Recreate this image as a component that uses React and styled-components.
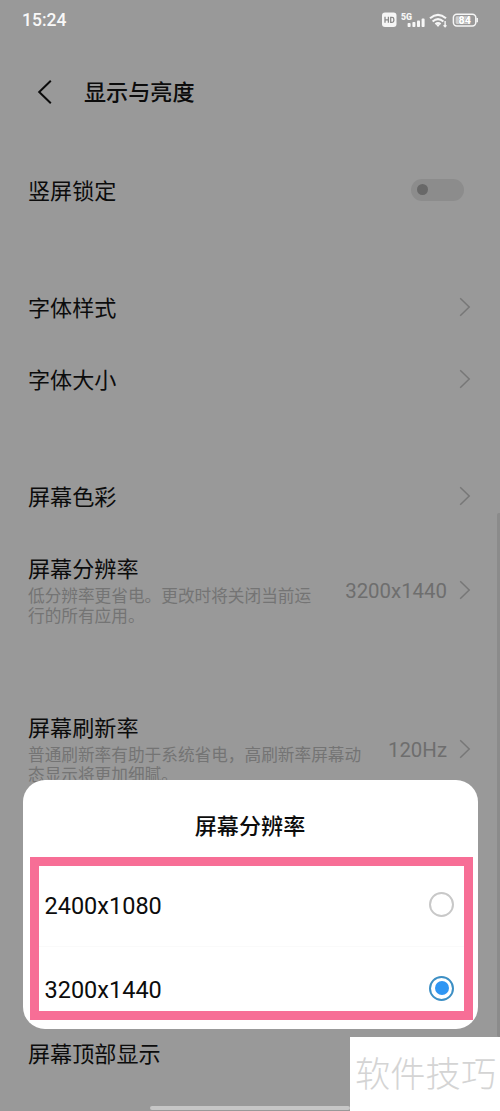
import React, { useState } from "react";
import styled, { createGlobalStyle } from "styled-components";

const resolutions = ["2400x1080", "3200x1440"];

const Chevron = () => (
  <svg width="12" height="20" viewBox="0 0 12 20" fill="none">
    <path d="M1.2 1.2 L10.2 10 L1.2 18.8" stroke="#777" strokeWidth="1.5" />
  </svg>
);

const StatusIcons = () => (
  <svg width="98" height="18" viewBox="0 0 98 18">
    {/* HD */}
    <rect x="2" y="1.5" width="14.5" height="14.5" rx="3" fill="#f6f6f6" />
    <path
      d="M5 5.8v6M8.4 5.8v6M5 8.8h3.4M10.7 6.4h1.4q1.7 0 1.7 1.6v1.8q0 1.5-1.7 1.5h-1.4z"
      stroke="#8a8a8a"
      strokeWidth="1.3"
      fill="none"
    />
    {/* signal */}
    <text x="21" y="8.5" fontFamily="Roboto, sans-serif" fontSize="8.8" fontWeight="900" fill="#f6f6f6">
      5G
    </text>
    <g fill="#f6f6f6">
      <rect x="27.6" y="12" width="3" height="4" rx="0.8" />
      <rect x="32.4" y="11" width="3" height="5" rx="0.8" />
      <rect x="37" y="9.4" width="3" height="6.6" rx="0.8" />
      <rect x="41.6" y="7.6" width="3" height="8.4" rx="0.8" />
    </g>
    {/* wifi */}
    <g fill="none" stroke="#f6f6f6" strokeWidth="2.1">
      <path d="M50 7.2Q58 0.4 66 7.2" />
      <path d="M52.6 10.5Q58 5.9 63.4 10.5" />
      <path d="M55.4 13.2Q58 11.2 60.6 13.2" />
    </g>
    <path d="M55.8 13.2h4.4L58 16z" fill="#f6f6f6" />
    <path d="M65.1 10v5.6M63.6 14.2l1.5 1.6 1.3-1.6" stroke="#f6f6f6" strokeWidth="1.4" fill="none" />
    {/* battery */}
    <rect x="73.4" y="3.2" width="22.4" height="11.8" rx="3.4" fill="none" stroke="#f6f6f6" strokeWidth="1.5" />
    <rect x="75.6" y="5.3" width="15" height="7.6" rx="1.4" fill="#cfcfcf" />
    <path d="M97.2 7v4.2" stroke="#f6f6f6" strokeWidth="1.5" />
    <text x="78.6" y="12.9" fontFamily="Roboto, sans-serif" fontSize="10.6" fontWeight="900" fill="#fff" stroke="#999" strokeWidth="0.8" paintOrder="stroke">
      84
    </text>
  </svg>
);

const App = () => {
  const [selected, setSelected] = useState("3200x1440");

  return (
    <Screen>
      <GlobalStyle />
      <StatusBar>
        <Time>15:24</Time>
        <StatusIcons />
      </StatusBar>
      <Header>
        <svg width="16" height="26" viewBox="0 0 16 26" fill="none">
          <path d="M13.8 1.8 L2.2 13 L13.8 24.2" stroke="#0c0c0c" strokeWidth="2" />
        </svg>
        <h1>显示与亮度</h1>
      </Header>

      <Group>
        <Row>
          <Label>竖屏锁定</Label>
          <Toggle>
            <span />
          </Toggle>
        </Row>
      </Group>
      <Group>
        <Row>
          <Label>字体样式</Label>
          <Chevron />
        </Row>
        <Row>
          <Label>字体大小</Label>
          <Chevron />
        </Row>
      </Group>
      <Group>
        <Row>
          <Label>屏幕色彩</Label>
          <Chevron />
        </Row>
        <Row $tall>
          <div>
            <Label>屏幕分辨率</Label>
            <Desc>
              低分辨率更省电。更改时将关闭当前运
              <br />
              行的所有应用。
            </Desc>
          </div>
          <Value>
            <span>3200x1440</span>
            <Chevron />
          </Value>
        </Row>
      </Group>
      <Group>
        <Row $tall>
          <div>
            <Label>屏幕刷新率</Label>
            <Desc>
              普通刷新率有助于系统省电，高刷新率屏幕动
              <br />
              态显示将更加细腻。
            </Desc>
          </div>
          <Value>
            <span>120Hz</span>
            <Chevron />
          </Value>
        </Row>
      </Group>
      <LastGroup>
        <Row>
          <Label>屏幕顶部显示</Label>
        </Row>
      </LastGroup>

      <ScrollThumb />
      <HomeBar />

      <Dialog>
        <DialogTitle>屏幕分辨率</DialogTitle>
        <Options>
          {resolutions.map((item) => (
            <Option key={item} onClick={() => setSelected(item)}>
              <span>{item}</span>
              <Radio $checked={selected === item} />
            </Option>
          ))}
        </Options>
      </Dialog>
      <Watermark>软件技巧</Watermark>
    </Screen>
  );
};

const GlobalStyle = createGlobalStyle`
  body {
    margin: 0;
    background: #999;
  }
  * {
    box-sizing: border-box;
  }
`;

const Screen = styled.div`
  position: relative;
  width: 500px;
  height: 1111px;
  overflow: hidden;
  background: #999;
  color: #0c0c0c;
  font-family: Roboto, "Noto Sans CJK SC", sans-serif;
`;

const StatusBar = styled.div`
  display: flex;
  justify-content: space-between;
  align-items: center;
  height: 40px;
  padding: 0 22px 0 22px;
`;

const Time = styled.span`
  font-size: 17.5px;
  font-weight: 500;
  color: #f8f8f8;
`;

const Header = styled.header`
  display: flex;
  align-items: center;
  gap: 31px;
  height: 104px;
  padding-left: 37px;
  h1 {
    margin: 0;
    padding-bottom: 4px;
    font-family: "Noto Sans CJK SC", sans-serif;
    font-size: 22.1px;
    font-weight: 500;
  }
`;

const Group = styled.section`
  margin: 0 29px 45px 28px;
  &:first-of-type {
    margin-top: 10px;
  }
`;

const LastGroup = styled(Group)`
  margin-top: 212px;
`;

const Row = styled.div`
  display: flex;
  justify-content: space-between;
  align-items: ${(props) => (props.$tall ? "flex-start" : "center")};
  height: ${(props) => (props.$tall ? "114px" : "72px")};
  padding-top: ${(props) => (props.$tall ? "20px" : "0")};
`;

const Label = styled.div`
  padding-bottom: 2px;
  font-family: "Noto Sans CJK SC", sans-serif;
  font-size: 22.1px;
  line-height: 30px;
`;

const Desc = styled.div`
  margin-top: 1px;
  font-family: "Noto Sans CJK SC", sans-serif;
  font-size: 16.67px;
  line-height: 20px;
  color: #747474;
  white-space: nowrap;
`;

const Value = styled.div`
  display: flex;
  align-items: center;
  gap: 12px;
  height: 32px;
  margin-top: 22px;
  font-size: 20.4px;
  color: #6e6e6e;
  span {
    padding-top: 2px;
  }
`;

const Toggle = styled.div`
  display: flex;
  align-items: center;
  width: 53px;
  height: 22px;
  margin-right: 7px;
  margin-bottom: 1px;
  padding-left: 6px;
  border-radius: 11px;
  background: #8c8c8c;
  span {
    width: 11px;
    height: 11px;
    border-radius: 50%;
    background: #686868;
  }
`;

const ScrollThumb = styled.div`
  position: absolute;
  top: 513px;
  right: 0;
  width: 3px;
  height: 524px;
  border-radius: 2px 0 0 2px;
  background: #8b8b8b;
`;

const HomeBar = styled.div`
  position: absolute;
  bottom: 1px;
  left: 150px;
  width: 200px;
  height: 4px;
  border-radius: 2px;
  background: #c6c6c6;
`;

const Dialog = styled.div`
  position: absolute;
  top: 780px;
  left: 23px;
  width: 455px;
  height: 249px;
  padding: 0 4px 0 7px;
  border-radius: 22px;
  background: #fff;
`;

const DialogTitle = styled.h2`
  margin: 0;
  height: 77px;
  padding: 13px 4px 0 0;
  font-family: "Noto Sans CJK SC", sans-serif;
  font-size: 22.1px;
  font-weight: 500;
  line-height: 62px;
  text-align: center;
`;

const Options = styled.div`
  height: 163px;
  width: 443px;
  border: 9px solid #f76e96;
`;

const Option = styled.div`
  display: flex;
  justify-content: space-between;
  align-items: center;
  height: 83px;
  padding: 0 10px 0 5.5px;
  font-size: 23.5px;
  span:first-child {
    padding-top: 3px;
  }
  &:first-child {
    height: 80px;
    padding-bottom: 4px;
  }
  & + & {
    border-top: 1px solid #fafafa;
  }
`;

const Radio = styled.span`
  display: flex;
  align-items: center;
  justify-content: center;
  width: 25px;
  height: 25px;
  border: 2px solid ${(props) => (props.$checked ? "#3d8fc4" : "#c8c8c8")};
  border-radius: 50%;
  &::after {
    content: "";
    width: 14px;
    height: 14px;
    border-radius: 50%;
    background: ${(props) => (props.$checked ? "#2f96f3" : "transparent")};
  }
`;

const Watermark = styled.div`
  position: absolute;
  right: 0;
  bottom: 0;
  width: 150px;
  height: 74px;
  padding-left: 5px;
  background: #fff;
  color: #d4d4d4;
  font-family: "Noto Sans CJK SC", sans-serif;
  font-size: 35.3px;
  font-weight: 300;
  line-height: 70px;
  white-space: nowrap;
`;

export default App;
